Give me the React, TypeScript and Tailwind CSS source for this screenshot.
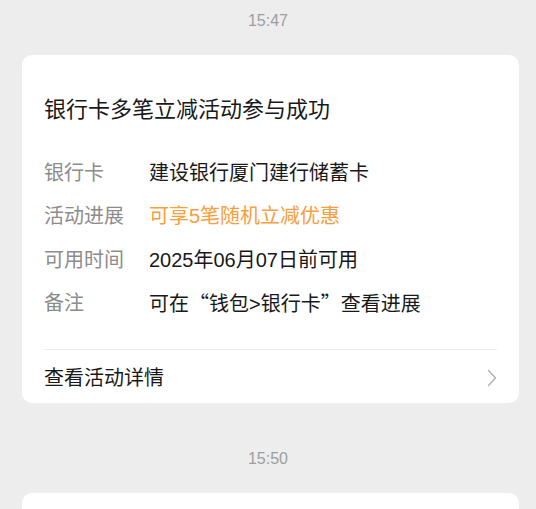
import React from 'react';

const sans = '"Liberation Sans", "Noto Sans CJK SC", sans-serif';
const cjk = '"Noto Sans CJK SC", sans-serif';

interface Row {
  label: string;
  value: React.ReactNode;
  accent?: boolean;
}

const rows: Row[] = [
  { label: '银行卡', value: '建设银行厦门建行储蓄卡' },
  { label: '活动进展', value: '可享5笔随机立减优惠', accent: true },
  { label: '可用时间', value: '2025年06月07日前可用' },
  {
    label: '备注',
    value: (
      <>
        可在<span style={{ fontFamily: cjk }}>“</span>钱包&gt;银行卡
        <span style={{ fontFamily: cjk }}>”</span>查看进展
      </>
    ),
  },
];

function Chevron() {
  return (
    <svg width="10" height="18" viewBox="0 0 10 18" fill="none" className="shrink-0">
      <path d="M1.5 1.5L8.5 9L1.5 16.5" stroke="#b2b2b2" strokeWidth="1.4" strokeLinecap="round" strokeLinejoin="round" />
    </svg>
  );
}

function TimeStamp({ time, className }: { time: string; className: string }) {
  return (
    <div className={`text-center text-[16px] leading-[24px] text-[#9e9e9e] ${className}`}>{time}</div>
  );
}

function ActivityCard() {
  return (
    <div className="ml-[22px] mr-[17px] rounded-[10px] bg-white px-[22px]">
      <h1 className="pt-[40px] text-[22px] leading-[30px] font-normal text-[#191919]">
        银行卡多笔立减活动参与成功
      </h1>
      <div className="mt-[26px] mb-[24px]">
        {rows.map((row) => (
          <div key={row.label} className="flex h-[43.5px] items-center text-[20px]">
            <span className="w-[105px] shrink-0 text-[#8c8c8c]">{row.label}</span>
            <span className={row.accent ? 'text-[#fa9d3b]' : 'text-[#191919]'}>{row.value}</span>
          </div>
        ))}
      </div>
      <div className="flex h-[54px] items-center justify-between border-t border-[#ececec] pt-[2px]">
        <span className="text-[20px] text-[#191919]">查看活动详情</span>
        <Chevron />
      </div>
    </div>
  );
}

export default function App() {
  return (
    <div className="h-[509px] overflow-hidden bg-[#ededed]" style={{ fontFamily: sans }}>
      <TimeStamp time="15:47" className="pt-[9px] mb-[22px]" />
      <ActivityCard />
      <TimeStamp time="15:50" className="mt-[44px] mb-[22px]" />
      <div className="ml-[22px] mr-[17px] h-[40px] rounded-[10px] bg-white" />
    </div>
  );
}
